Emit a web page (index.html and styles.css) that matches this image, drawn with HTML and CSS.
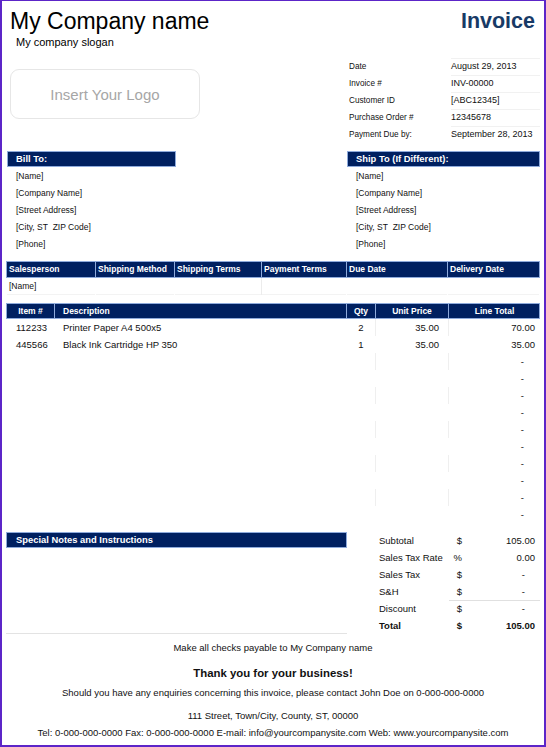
FILE: index.html
```html
<!DOCTYPE html>
<html lang="en">
<head>
<meta charset="utf-8">
<title>Invoice</title>
<link rel="stylesheet" href="styles.css">
</head>
<body>
<div class="page">
  <header class="top">
    <div class="brand">
      <h1 class="company">My Company name</h1>
      <p class="slogan">My company slogan</p>
      <div class="logo">Insert Your Logo</div>
    </div>
    <div class="meta">
      <h2 class="title">Invoice</h2>
      <dl class="info">
        <dt>Date</dt><dd>August 29, 2013</dd>
        <dt>Invoice #</dt><dd>INV-00000</dd>
        <dt>Customer ID</dt><dd>[ABC12345]</dd>
        <dt>Purchase Order #</dt><dd>12345678</dd>
        <dt>Payment Due by:</dt><dd>September 28, 2013</dd>
      </dl>
    </div>
  </header>

  <section class="addresses">
    <div class="addr bill">
      <div class="bar">Bill To:</div>
      <ul class="lines">
        <li>[Name]</li>
        <li>[Company Name]</li>
        <li>[Street Address]</li>
        <li>[City, ST&nbsp; ZIP Code]</li>
        <li>[Phone]</li>
      </ul>
    </div>
    <div class="addr ship">
      <div class="bar">Ship To (If Different):</div>
      <ul class="lines">
        <li>[Name]</li>
        <li>[Company Name]</li>
        <li>[Street Address]</li>
        <li>[City, ST&nbsp; ZIP Code]</li>
        <li>[Phone]</li>
      </ul>
    </div>
  </section>

  <section class="sales">
    <div class="srow head">
      <div>Salesperson</div>
      <div>Shipping Method</div>
      <div>Shipping Terms</div>
      <div>Payment Terms</div>
      <div>Due Date</div>
      <div>Delivery Date</div>
    </div>
    <div class="srow data">
      <div>[Name]</div>
      <div></div>
      <div class="sep"></div>
      <div></div>
      <div></div>
      <div></div>
    </div>
  </section>

  <section class="items">
    <div class="irow head">
      <div class="c-item">Item #</div>
      <div class="c-desc">Description</div>
      <div class="c-qty">Qty</div>
      <div class="c-price">Unit Price</div>
      <div class="c-total">Line Total</div>
    </div>
    <div class="irow data">
      <div class="c-item">112233</div>
      <div class="c-desc">Printer Paper A4 500x5</div>
      <div class="c-qty">2</div>
      <div class="c-price">35.00</div>
      <div class="c-total">70.00</div>
    </div>
    <div class="irow data">
      <div class="c-item">445566</div>
      <div class="c-desc">Black Ink Cartridge HP 350</div>
      <div class="c-qty">1</div>
      <div class="c-price">35.00</div>
      <div class="c-total">35.00</div>
    </div>
    <div class="irow data"><div class="c-item"></div><div class="c-desc"></div><div class="c-qty"></div><div class="c-price"></div><div class="c-total dash">-</div></div>
    <div class="irow data"><div class="c-item"></div><div class="c-desc"></div><div class="c-qty"></div><div class="c-price"></div><div class="c-total dash">-</div></div>
    <div class="irow data"><div class="c-item"></div><div class="c-desc"></div><div class="c-qty"></div><div class="c-price"></div><div class="c-total dash">-</div></div>
    <div class="irow data"><div class="c-item"></div><div class="c-desc"></div><div class="c-qty"></div><div class="c-price"></div><div class="c-total dash">-</div></div>
    <div class="irow data"><div class="c-item"></div><div class="c-desc"></div><div class="c-qty"></div><div class="c-price"></div><div class="c-total dash">-</div></div>
    <div class="irow data"><div class="c-item"></div><div class="c-desc"></div><div class="c-qty"></div><div class="c-price"></div><div class="c-total dash">-</div></div>
    <div class="irow data"><div class="c-item"></div><div class="c-desc"></div><div class="c-qty"></div><div class="c-price"></div><div class="c-total dash">-</div></div>
    <div class="irow data"><div class="c-item"></div><div class="c-desc"></div><div class="c-qty"></div><div class="c-price"></div><div class="c-total dash">-</div></div>
    <div class="irow data"><div class="c-item"></div><div class="c-desc"></div><div class="c-qty"></div><div class="c-price"></div><div class="c-total dash">-</div></div>
    <div class="irow data"><div class="c-item"></div><div class="c-desc"></div><div class="c-qty"></div><div class="c-price"></div><div class="c-total dash">-</div></div>
  </section>

  <section class="bottom">
    <div class="notes">
      <div class="bar">Special Notes and Instructions</div>
    </div>
    <div class="totals">
      <div class="t-label">Subtotal</div><div class="t-sym">$</div><div class="t-val">105.00</div>
      <div class="t-label">Sales Tax Rate</div><div class="t-sym">%</div><div class="t-val">0.00</div>
      <div class="t-label">Sales Tax</div><div class="t-sym">$</div><div class="t-val dash">-</div>
      <div class="t-label">S&amp;H</div><div class="t-sym">$</div><div class="t-val dash">-</div>
      <div class="t-label">Discount</div><div class="t-sym ruled">$</div><div class="t-val dash ruled">-</div>
      <div class="t-label strong">Total</div><div class="t-sym strong">$</div><div class="t-val strong">105.00</div>
    </div>
  </section>

  <footer class="foot">
    <p class="f-pay">Make all checks payable to My Company name</p>
    <p class="f-thanks">Thank you for your business!</p>
    <p class="f-enq">Should you have any enquiries concerning this invoice, please contact John Doe on 0-000-000-0000</p>
    <p class="f-addr">111 Street, Town/City, County, ST, 00000</p>
    <p class="f-tel">Tel: 0-000-000-0000 Fax: 0-000-000-0000 E-mail: info@yourcompanysite.com Web: www.yourcompanysite.com</p>
  </footer>
</div>
</body>
</html>
```

FILE: styles.css
```css
* {
  box-sizing: border-box;
  margin: 0;
  padding: 0;
}

body {
  margin: 0;
  background: #ffffff;
  color: #111111;
  font-family: "Liberation Sans", Arial, sans-serif;
}

.page {
  width: 546px;
  height: 747px;
  border-style: solid;
  border-color: #5c25c8;
  border-width: 1px 2px 2px 2px;
  overflow: hidden;
}

/* ---------- top ---------- */
.top {
  display: flex;
  justify-content: space-between;
}

.brand {
  padding: 7px 0 0 8px;
}

.company {
  font-size: 23px;
  font-weight: normal;
  line-height: 26px;
  color: #000;
}

.slogan {
  font-size: 11px;
  line-height: 13px;
  margin: 1.5px 0 0 6px;
  color: #000;
}

.logo {
  width: 190px;
  height: 50px;
  margin-top: 20.5px;
  border: 1px solid #e6e6e6;
  border-radius: 9px;
  display: flex;
  align-items: center;
  justify-content: center;
  color: #a6a6a6;
  font-size: 15px;
}

.meta {
  width: 191px;
  margin-right: 4px;
  padding-top: 7px;
}

.title {
  font-size: 21.5px;
  font-weight: bold;
  line-height: 26px;
  text-align: right;
  padding-right: 5px;
  color: #183a66;
}

.info {
  display: grid;
  grid-template-columns: 102px 1fr;
  margin-top: 24px;
}

.info dt,
.info dd {
  height: 17px;
  line-height: 17px;
}

.info dt {
  font-size: 8.2px;
}

.info dd {
  font-size: 9px;
  box-shadow: inset 0 1px 0 #f1f1f1;
}

/* ---------- addresses ---------- */
.addresses {
  display: flex;
  justify-content: space-between;
  padding: 0 4px 0 5px;
  margin-top: 8px;
}

.bill {
  width: 169px;
}

.ship {
  width: 193px;
}

.bar {
  background: #002060;
  border: 1px solid #8eaadb;
  color: #ffffff;
  font-weight: bold;
  font-size: 9.4px;
  line-height: 14px;
  padding-left: 8px;
}

.lines {
  list-style: none;
  padding: 1px 0 0 9px;
  font-size: 8.5px;
}

.lines li {
  line-height: 17px;
}

/* ---------- sales ---------- */
.sales {
  margin: 8px 4px 0 4px;
}

.srow {
  display: grid;
  grid-template-columns: 89px 79px 87px 85px 101px 92px;
  border-left: 1px solid transparent;
}

.srow > div {
  border-right: 1px solid transparent;
  padding-left: 2px;
  font-size: 8.5px;
  white-space: nowrap;
  overflow: hidden;
}

.srow.head {
  background: #002060;
  border: 1px solid #8eaadb;
}

.srow.head > div {
  border-right-color: #8eaadb;
  color: #ffffff;
  font-weight: bold;
  line-height: 15px;
}

.srow.head > div:last-child {
  border-right: none;
}

.srow.data > div {
  line-height: 17px;
  height: 17px;
  box-shadow: inset 0 -1px 0 #f3f3f3;
}

.srow.data > .sep {
  border-right-color: #ececec;
}

/* ---------- items ---------- */
.items {
  margin: 8px 4px 0 4px;
}

.irow {
  display: grid;
  grid-template-columns: 48px 292px 29px 73px 91px;
  border-left: 1px solid transparent;
}

.irow > div {
  border-right: 1px solid transparent;
  white-space: nowrap;
}

.irow.head {
  background: #002060;
  border: 1px solid #8eaadb;
}

.irow.head > div {
  border-right-color: #8eaadb;
  color: #ffffff;
  font-weight: bold;
  font-size: 8.5px;
  line-height: 14px;
  text-align: center;
}

.irow.head > div:last-child {
  border-right: none;
}

.irow.head > .c-desc {
  text-align: left;
  padding-left: 8px;
}

.irow.data > div {
  height: 17px;
  line-height: 17px;
  font-size: 9.5px;
}

.irow.data:nth-child(even) > .c-qty,
.irow.data:nth-child(even) > .c-price {
  border-right-color: #efefef;
}

.irow.data > .c-item {
  padding-left: 9px;
}

.irow.data > .c-desc {
  padding-left: 8px;
}

.irow.data > .c-qty {
  text-align: center;
}

.irow.data > .c-price {
  text-align: right;
  padding-right: 9px;
}

.irow.data > .c-total {
  text-align: right;
  padding-right: 4px;
}

.irow.data > .c-total.dash {
  padding-right: 15px;
}

/* ---------- bottom ---------- */
.bottom {
  display: flex;
  margin-top: 9px;
}

.notes {
  width: 341px;
  height: 102px;
  margin-left: 4px;
  border-bottom: 1px solid #e3e3e3;
}

.notes .bar {
  padding-left: 9px;
}

.totals {
  width: 161px;
  margin-left: 32px;
  display: grid;
  grid-template-columns: 70px 13px 1fr;
  grid-auto-rows: 17px;
  align-content: start;
  font-size: 9.5px;
}

.totals > div {
  line-height: 17px;
  white-space: nowrap;
}

.t-sym {
  text-align: right;
}

.t-val {
  text-align: right;
  padding-right: 5px;
}

.t-val.dash {
  padding-right: 15px;
}

.ruled {
  box-shadow: inset 0 1px 0 #e0e0e0;
}

.strong {
  font-weight: bold;
}

/* ---------- footer ---------- */
.foot {
  text-align: center;
  font-size: 9.5px;
  color: #111;
}

.foot p {
  line-height: 14px;
  white-space: nowrap;
}

.f-pay {
  margin-top: 7px;
}

.f-thanks {
  margin-top: 11px;
  font-weight: bold;
  font-size: 11.4px;
}

.f-enq {
  margin-top: 6px;
}

.f-addr {
  margin-top: 9px;
}

.f-tel {
  margin-top: 3px;
}
```
